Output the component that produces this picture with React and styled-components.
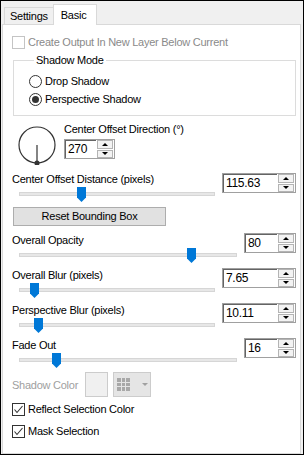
import styled, { createGlobalStyle } from "styled-components";

const GlobalStyle = createGlobalStyle`
  body {
    margin: 0;
    font-family: "Liberation Sans", Arial, sans-serif;
    font-size: 11px;
    letter-spacing: -0.25px;
    color: #000;
  }
`;

const Window = styled.div`
  width: 304px;
  height: 455px;
  box-sizing: border-box;
  border: 1px solid #000;
  background: #f0f0f0;
  display: flex;
  flex-direction: column;
  overflow: hidden;
`;

const TabStrip = styled.div`
  height: 23px;
  display: flex;
  align-items: flex-end;
  padding-left: 3px;
`;

const Tab = styled.div`
  position: relative;
  box-sizing: border-box;
  border: 1px solid #d9d9d9;
  border-bottom: none;
  line-height: 16px;
  height: ${(p) => (p.$active ? "21px" : "17px")};
  padding: ${(p) => (p.$active ? "2px 10px 0 7px" : "0 5px 0 5px")};
  margin-left: ${(p) => (p.$active ? "-1px" : "0")};
  margin-bottom: ${(p) => (p.$active ? "-1px" : "0")};
  background: ${(p) => (p.$active ? "#fff" : "#f0f0f0")};
  z-index: ${(p) => (p.$active ? 1 : 0)};
`;

const Panel = styled.div`
  flex: 1;
  margin: 0 2px 0 1px;
  background: #fff;
  border: 1px solid #d9d9d9;
  padding: 11px 4px 0 9px;
  display: flex;
  flex-direction: column;
`;

const CheckRow = styled.label`
  display: flex;
  align-items: center;
  gap: 3px;
  height: 13px;
  margin-top: ${(p) => p.$top || 0}px;
  color: ${(p) => (p.$disabled ? "#8a8a8a" : "#000")};
  line-height: 13px;
`;

const CheckBox = styled.span`
  width: 13px;
  height: 13px;
  box-sizing: border-box;
  border: 1px solid ${(p) => (p.$disabled ? "#c4c4c4" : "#333")};
  background: #fff;
  display: flex;
  align-items: center;
  justify-content: center;
  flex: none;
`;

const Group = styled.fieldset`
  margin: 4px 0 0 1px;
  padding: 5px 0 7px 15px;
  border: 1px solid #dcdcdc;
  min-width: 0;
  display: flex;
  flex-direction: column;
`;

const Legend = styled.legend`
  padding: 0 2px;
  margin-left: 5px;
  line-height: 14px;
`;

const RadioRow = styled.div`
  display: flex;
  align-items: center;
  gap: 3px;
  height: 18px;
`;

const Radio = styled.span`
  width: 13px;
  height: 13px;
  box-sizing: border-box;
  border: 1px solid #333;
  border-radius: 50%;
  display: flex;
  align-items: center;
  justify-content: center;
  &::after {
    content: "";
    width: 7px;
    height: 7px;
    border-radius: 50%;
    background: ${(p) => (p.$checked ? "#333" : "transparent")};
  }
`;

const DialSection = styled.div`
  display: flex;
  align-items: flex-start;
  margin-top: 6px;
`;

const DialSvg = styled.svg`
  margin: 3px 0 0 5px;
  flex: none;
`;

const DialColumn = styled.div`
  display: flex;
  flex-direction: column;
  gap: 3px;
  margin-left: 7px;
  line-height: 14px;
`;

const SpinBox = styled.div`
  width: ${(p) => p.$width}px;
  height: 20px;
  box-sizing: border-box;
  border: 1px solid #a0a0a0;
  background: #fff;
  display: flex;
  flex: none;
`;

const SpinInput = styled.div`
  flex: 1;
  border-top: 1px solid #646464;
  border-left: 1px solid #646464;
  padding-left: 2px;
  line-height: 17px;
  font-size: 12px;
  letter-spacing: -0.3px;
`;

const SpinButtons = styled.div`
  width: 16px;
  display: flex;
  flex-direction: column;
  gap: 1px;
  padding: 0 1px 0 1px;
`;

const SpinButton = styled.div`
  flex: 1;
  box-sizing: border-box;
  border: 1px solid #b4b4b4;
  background: #f3f3f3;
  display: flex;
  align-items: center;
  justify-content: center;
  &::after {
    content: "";
    border-left: 3px solid transparent;
    border-right: 3px solid transparent;
    ${(p) =>
      p.$down
        ? "border-top: 3px solid #000;"
        : "border-bottom: 3px solid #000;"}
  }
`;

const SliderRow = styled.div`
  display: grid;
  grid-template-columns: 1fr auto;
  grid-template-rows: 14px 16px;
  column-gap: 7px;
  margin-top: ${(p) => p.$top}px;
  line-height: 14px;
  & > ${SpinBox} {
    grid-row: 1 / span 2;
    grid-column: 2;
    margin-top: ${(p) => p.$spinTop || 0}px;
  }
`;

const TrackArea = styled.div`
  position: relative;
  padding-left: 7px;
  display: flex;
  align-items: center;
`;

const Track = styled.div`
  flex: 1;
  height: 4px;
  box-sizing: border-box;
  background: #e7e7e7;
  border: 1px solid #d6d6d6;
`;

const Thumb = styled.div`
  position: absolute;
  top: 1px;
  width: 9px;
  height: 15px;
  background: #0078d7;
  clip-path: polygon(0 0, 100% 0, 100% 70%, 50% 100%, 0 70%);
`;

const Button = styled.div`
  margin: 5px 0 0 1px;
  width: 153px;
  height: 19px;
  box-sizing: border-box;
  border: 1px solid #adadad;
  background: #e1e1e1;
  text-align: center;
  line-height: 17px;
`;

const ColorRow = styled.div`
  display: flex;
  align-items: center;
  height: 25px;
  margin-top: 4px;
  color: #a0a0a0;
`;

const ColorLabel = styled.span`
  width: 73px;
`;

const Swatch = styled.div`
  width: 23px;
  height: 25px;
  box-sizing: border-box;
  border: 1px solid #cccccc;
  background: #f0f0f0;
`;

const DropButton = styled.div`
  margin-left: 5px;
  width: 38px;
  height: 25px;
  box-sizing: border-box;
  border: 1px solid #cccccc;
  background: #e5e5e5;
  display: flex;
  align-items: center;
  padding-left: 3px;
  gap: 12px;
`;

const Arrow = styled.span`
  border-left: 3px solid transparent;
  border-right: 3px solid transparent;
  border-top: 3px solid #a0a0a0;
`;

const Check = () => (
  <svg width="11" height="11" viewBox="0 0 11 11">
    <polyline points="1.5,5.5 4,8.5 9.5,2" fill="none" stroke="#333" strokeWidth="1.1" />
  </svg>
);

const sliders = [
  { label: "Overall Opacity", value: "80", thumb: 168, width: 52 },
  { label: "Overall Blur (pixels)", value: "7.65", thumb: 11, width: 74 },
  { label: "Perspective Blur (pixels)", value: "10.11", thumb: 15, width: 74 },
  { label: "Fade Out", value: "16", thumb: 33, width: 52 },
];

const Spin = ({ value, width }) => (
  <SpinBox $width={width}>
    <SpinInput>{value}</SpinInput>
    <SpinButtons>
      <SpinButton />
      <SpinButton $down />
    </SpinButtons>
  </SpinBox>
);

const Slider = ({ label, value, thumb, width, top, spinTop }) => (
  <SliderRow $top={top} $spinTop={spinTop}>
    <span>{label}</span>
    <Spin value={value} width={width} />
    <TrackArea>
      <Track />
      <Thumb style={{ left: 7 + thumb }} />
    </TrackArea>
  </SliderRow>
);

export default function App() {
  return (
    <Window>
      <GlobalStyle />
      <TabStrip>
        <Tab>Settings</Tab>
        <Tab $active>Basic</Tab>
      </TabStrip>
      <Panel>
        <CheckRow $disabled>
          <CheckBox $disabled />
          Create Output In New Layer Below Current
        </CheckRow>
        <Group>
          <Legend>Shadow Mode</Legend>
          <RadioRow>
            <Radio />
            Drop Shadow
          </RadioRow>
          <RadioRow>
            <Radio $checked />
            Perspective Shadow
          </RadioRow>
        </Group>
        <DialSection>
          <DialSvg width="40" height="40" viewBox="0 0 40 40">
            <circle cx="20" cy="20" r="18" fill="none" stroke="#333" strokeWidth="1.2" />
            <line x1="20" y1="20" x2="20" y2="38" stroke="#333" strokeWidth="1.2" />
            <circle cx="20" cy="38" r="2.6" fill="#333" />
          </DialSvg>
          <DialColumn>
            <span>Center Offset Direction (°)</span>
            <Spin value="270" width={51} />
          </DialColumn>
        </DialSection>
        <Slider
          label="Center Offset Distance (pixels)"
          value="115.63"
          thumb={58}
          width={74}
          top={7}
          spinTop={1}
        />
        <Button>Reset Bounding Box</Button>
        {sliders.map((s, i) => (
          <Slider key={s.label} {...s} top={i === 0 ? 7 : 5} />
        ))}
        <ColorRow>
          <ColorLabel>Shadow Color</ColorLabel>
          <Swatch />
          <DropButton>
            <svg width="13" height="13" viewBox="0 0 13 13">
              <rect width="13" height="13" fill="#a8a8a8" />
              <path d="M4.5 0V13M8.5 0V13M0 4.5H13M0 8.5H13" stroke="#e5e5e5" strokeWidth="1" />
            </svg>
            <Arrow />
          </DropButton>
        </ColorRow>
        <CheckRow $top={6}>
          <CheckBox>
            <Check />
          </CheckBox>
          Reflect Selection Color
        </CheckRow>
        <CheckRow $top={9}>
          <CheckBox>
            <Check />
          </CheckBox>
          Mask Selection
        </CheckRow>
      </Panel>
    </Window>
  );
}
